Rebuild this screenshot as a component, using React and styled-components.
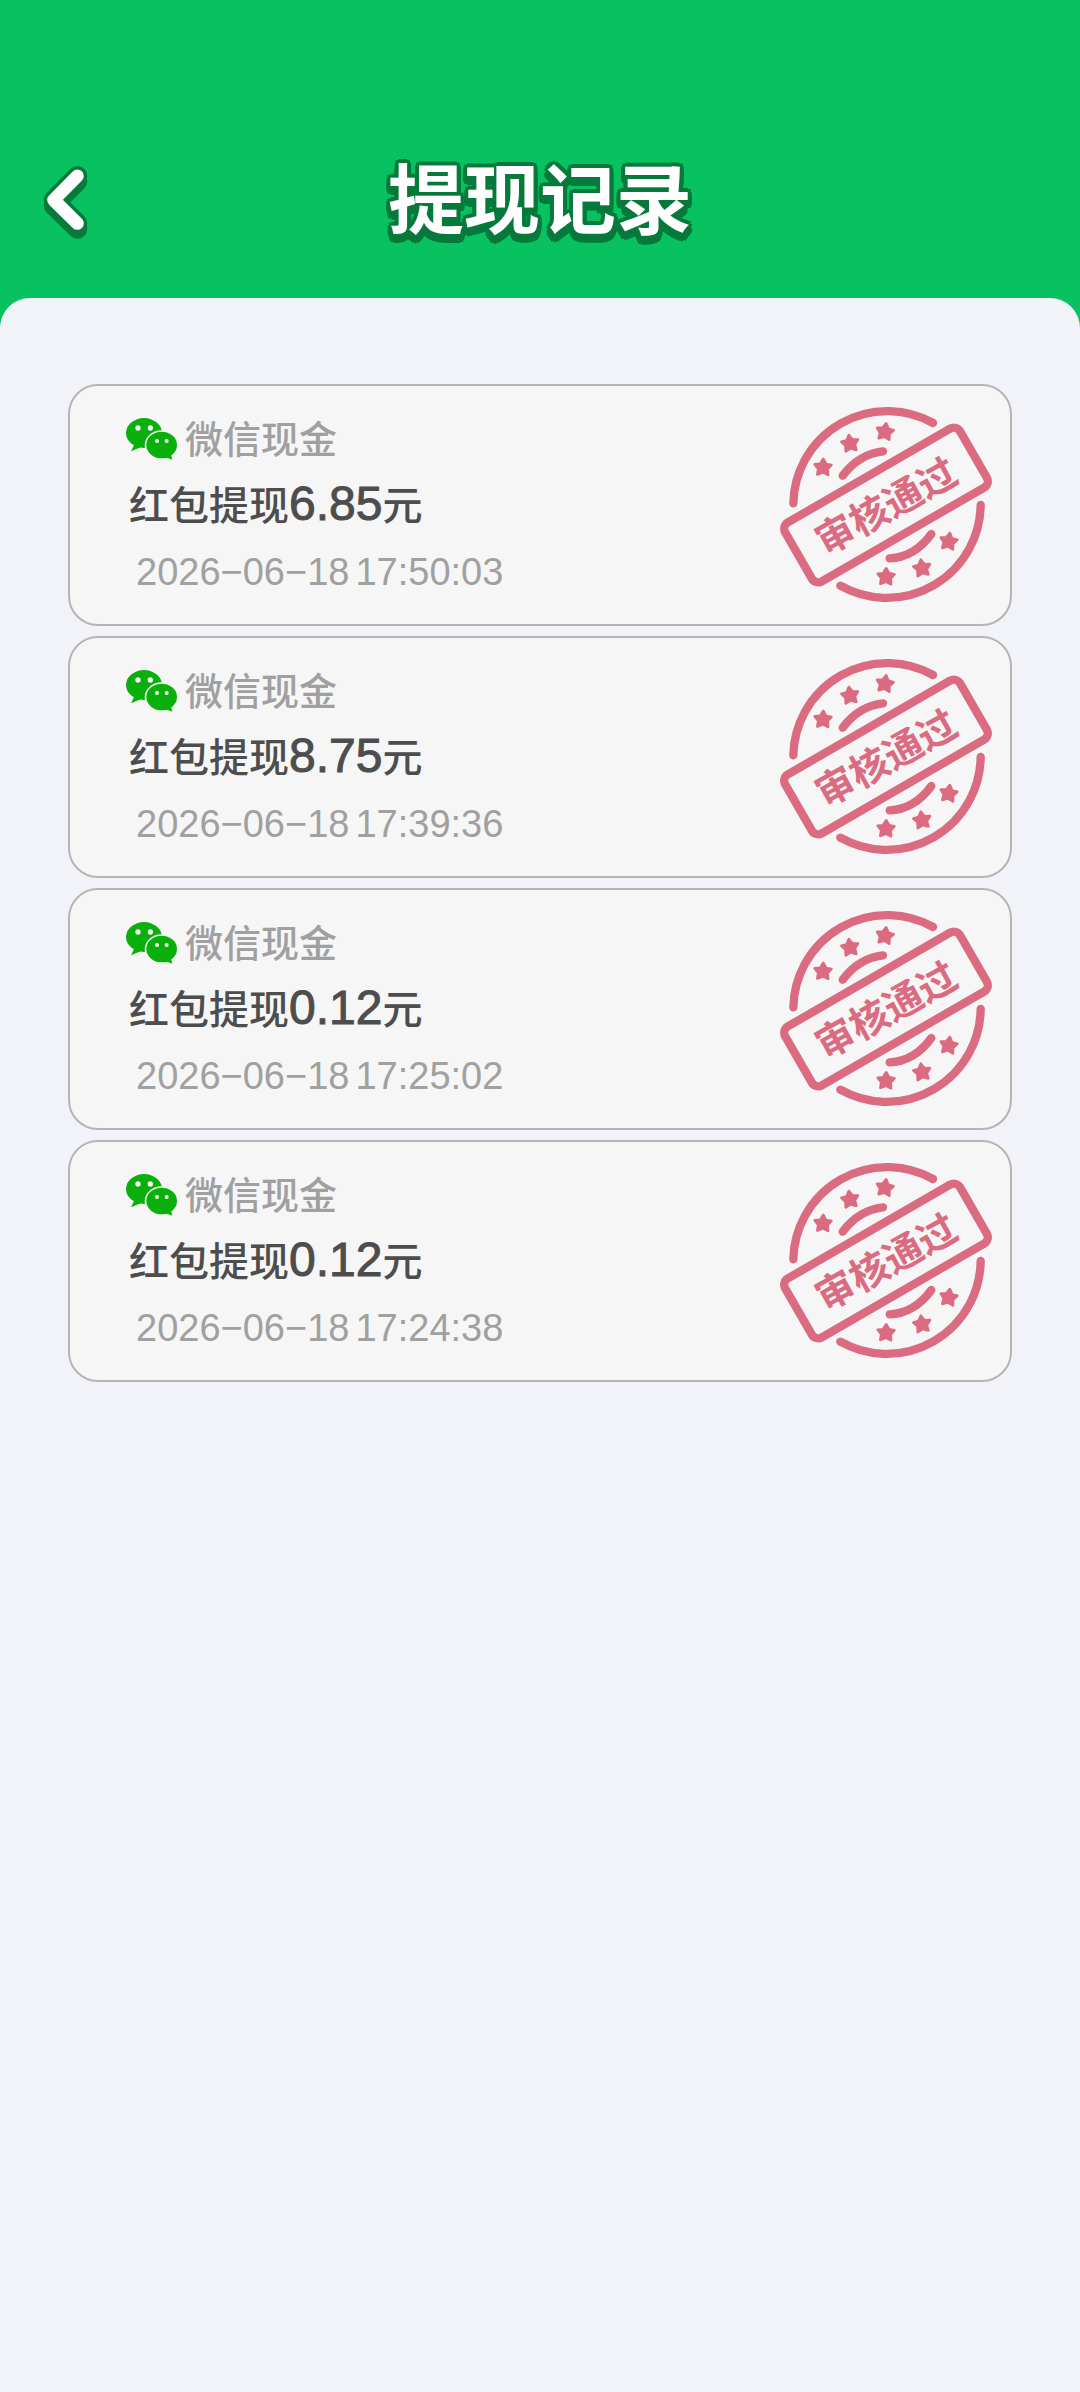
import React from "react";
import styled, { createGlobalStyle } from "styled-components";

const GlobalStyle = createGlobalStyle`
  *, *::before, *::after { box-sizing: border-box; }
  body {
    margin: 0;
    background: #f1f3f8;
    font-family: "Liberation Sans", "Noto Sans CJK SC", sans-serif;
  }
`;

const Page = styled.div`
  min-height: 100vh;
  background: linear-gradient(#08c160 0 360px, #f1f3f8 360px);
`;

const Header = styled.header`
  display: grid;
  grid-template-columns: 96px 1fr 96px;
  align-items: center;
  padding: 152px 0 46px;
`;

const BackButton = styled.button`
  display: flex;
  justify-self: end;
  width: 54px;
  padding: 0;
  border: 0;
  background: none;
  cursor: pointer;
`;

const Title = styled.h1`
  margin: 0;
  color: #fff;
  font-size: 76px;
  font-weight: 700;
  line-height: 100px;
  text-align: center;
  text-shadow:
    4px 0 #06793b, -4px 0 #06793b, 0 -4px #06793b, 0 4px #06793b,
    3px 3px #06793b, -3px 3px #06793b, 3px -3px #06793b, -3px -3px #06793b,
    4px 4px #06793b, -4px 4px #06793b, 4px 6px #06793b, -4px 6px #06793b,
    3px 8px #06793b, -3px 8px #06793b, 0 9px #06793b;
`;

const Panel = styled.main`
  min-height: calc(100vh - 298px);
  padding: 86px 68px;
  border-radius: 30px 30px 0 0;
  background: #f1f3f8;
`;

const RecordList = styled.ul`
  display: flex;
  flex-direction: column;
  gap: 10px;
  margin: 0;
  padding: 0;
  list-style: none;
`;

const Card = styled.li`
  display: flex;
  align-items: center;
  justify-content: space-between;
  padding: 19px 16px 19px 55px;
  border: 2px solid #b5b5b5;
  border-radius: 30px;
  background: #f6f6f6;
`;

const Details = styled.div`
  display: flex;
  flex-direction: column;
  padding-top: 2px;
`;

const Channel = styled.div`
  display: flex;
  align-items: center;
  gap: 7px;
  color: #a0a0a0;
  font-size: 38px;
  font-weight: 500;
  line-height: 66px;

  svg {
    margin-bottom: 3px;
  }
`;

const Amount = styled.div`
  padding-left: 4px;
  color: #4d4d4d;
  font-size: 40px;
  font-weight: 500;
  line-height: 66px;
`;

const Figure = styled.span`
  font-size: 48px;
  line-height: 48px;
  -webkit-text-stroke: 1px #4d4d4d;
`;

const Time = styled.time`
  display: flex;
  gap: 6px;
  padding-left: 11px;
  color: #a0a0a0;
  font-size: 38px;
  line-height: 66px;
`;

const StampText = styled.text`
  font-family: "Noto Sans CJK SC", sans-serif;
  font-size: 116px;
  font-weight: 700;
  text-anchor: middle;
`;

function BackIcon() {
  return (
    <svg width="47" height="74" viewBox="125 75 141 222" fill="none" strokeLinecap="round" strokeLinejoin="round" aria-hidden="true">
      <path d="M231 108 160 180l71 70M231 124 160 196l71 70" stroke="#06793b" strokeWidth="60" />
      <path d="M231 108 160 180l71 70" stroke="#fff" strokeWidth="39" />
    </svg>
  );
}

function WeChatIcon() {
  return (
    <svg width="53" height="44" viewBox="195 140 159 132" aria-hidden="true">
      <g fill="#09b00b">
        <ellipse cx="252" cy="188" rx="54" ry="45" />
        <path d="M224 220 213 243l29-12z" />
      </g>
      <ellipse cx="305" cy="224" rx="51" ry="44" fill="#f6f6f6" />
      <g fill="#09b00b">
        <ellipse cx="305" cy="224" rx="46" ry="40" />
        <path d="M315 260 337 268l-5-19z" />
      </g>
      <g fill="#f6f6f6">
        <circle cx="234" cy="173" r="8" />
        <circle cx="271" cy="173" r="8" />
        <circle cx="291" cy="212" r="6" />
        <circle cx="320" cy="212" r="6" />
      </g>
    </svg>
  );
}

const STARS = [
  [193, 262, 2],
  [274, 190, -8],
  [379, 155, 8],
  [570, 484, 8],
  [490, 564, -8],
  [382, 590, 2],
];

function ApprovedStamp() {
  return (
    <svg width="216" height="200" viewBox="58 75 648 600" role="img" aria-label="审核通过">
      <g fill="none" stroke="#db6b80" strokeWidth="25" strokeLinecap="round" strokeLinejoin="round">
        <path d="M104 370A282 282 0 0 1 523 129" />
        <path d="M666 375A282 282 0 0 1 245 617" />
        <path d="M252 287Q301 222 373 214" />
        <path d="M393 535Q467 532 518 462" />
        <rect x="79" y="273" width="606" height="204" rx="22" transform="rotate(-30 382 375)" />
      </g>
      <g fill="#db6b80" stroke="#db6b80" strokeWidth="8" strokeLinejoin="round">
        {STARS.map(([x, y, turn]) => (
          <path
            key={x}
            transform={`translate(${x} ${y}) rotate(${turn})`}
            d="M0-25 9-10 25-8 14 5 16 22 0 15-16 22-14 5-25-8-9-10z"
          />
        ))}
      </g>
      <StampText x="382" y="421" fill="#db6b80" transform="rotate(-29 382 378)">审核通过</StampText>
    </svg>
  );
}

const RECORDS = [
  { amount: "6.85", date: "2026-06-18", time: "17:50:03" },
  { amount: "8.75", date: "2026-06-18", time: "17:39:36" },
  { amount: "0.12", date: "2026-06-18", time: "17:25:02" },
  { amount: "0.12", date: "2026-06-18", time: "17:24:38" },
];

function RecordCard({ amount, date, time }) {
  return (
    <Card>
      <Details>
        <Channel>
          <WeChatIcon />
          微信现金
        </Channel>
        <Amount>
          红包提现<Figure>{amount}</Figure>元
        </Amount>
        <Time dateTime={`${date}T${time}`}>
          <span>{date.replaceAll("-", "−")}</span> <span>{time}</span>
        </Time>
      </Details>
      <ApprovedStamp />
    </Card>
  );
}

export default function App() {
  return (
    <>
      <GlobalStyle />
      <Page>
        <Header>
          <BackButton type="button" aria-label="返回">
            <BackIcon />
          </BackButton>
          <Title>提现记录</Title>
        </Header>
        <Panel>
          <RecordList>
            {RECORDS.map((record) => (
              <RecordCard key={record.time} {...record} />
            ))}
          </RecordList>
        </Panel>
      </Page>
    </>
  );
}
